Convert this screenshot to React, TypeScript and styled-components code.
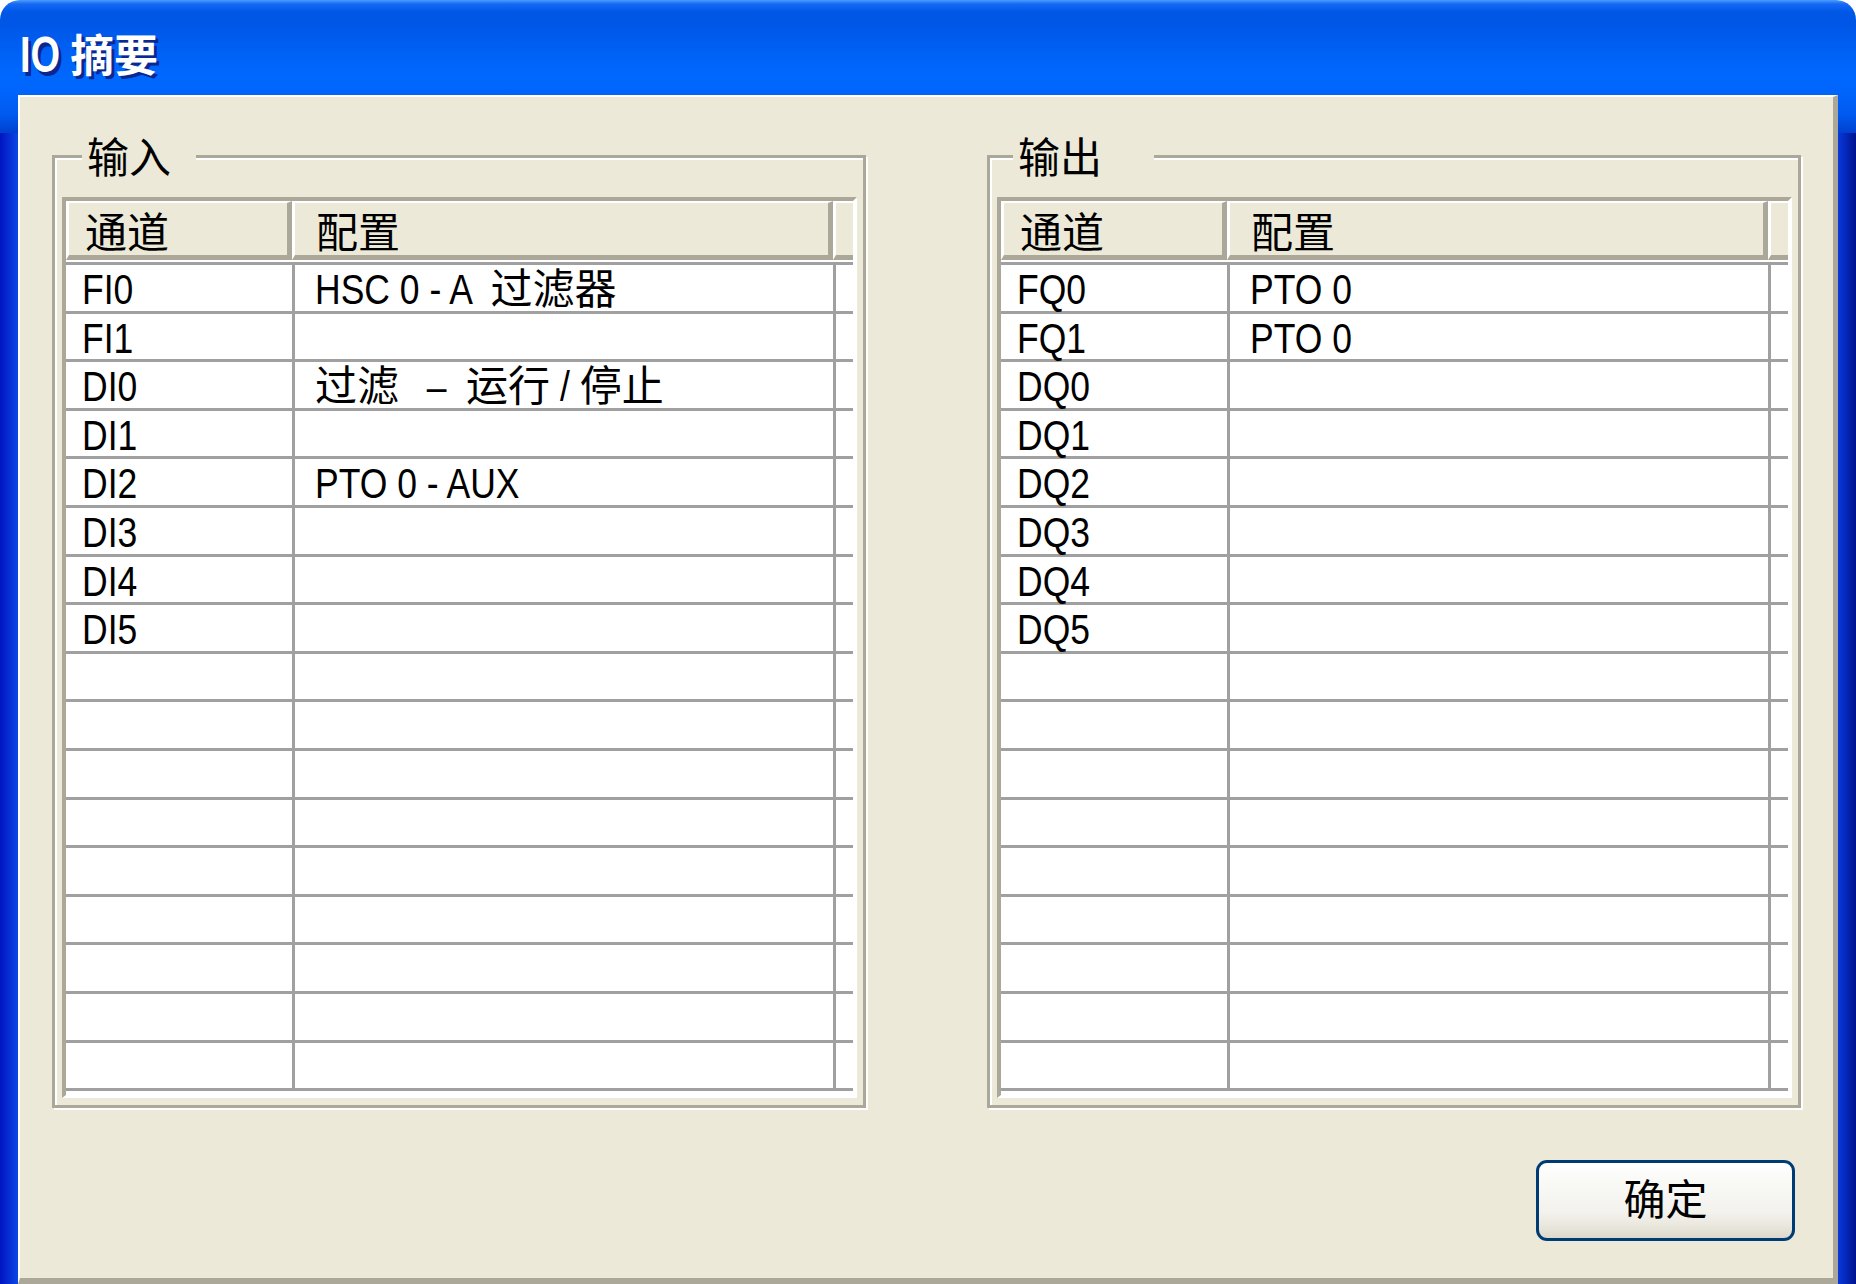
import styled, { createGlobalStyle } from "styled-components";

const GlobalStyle = createGlobalStyle`
  html, body {
    margin: 0;
    padding: 0;
    background: #fff;
  }
  body {
    width: 1856px;
    height: 1284px;
    overflow: hidden;
    font-family: "Liberation Sans", "Noto Sans CJK SC", sans-serif;
  }
`;

// Latin runs: the dialog uses a tall, narrow face. Set it small for the width
// and stretch it up around its own baseline.
const Latin = styled.span<{ $size: number; $sy: number }>`
  display: inline-block;
  font-family: "Liberation Sans", sans-serif;
  font-size: ${(p) => p.$size}px;
  line-height: 1;
  white-space: pre;
  transform: scaleY(${(p) => p.$sy});
  transform-origin: 0 0.8465em;
`;

const CJK = /([\u2e80-\u9fff\uff00-\uffef]+)/;

const MixedText = ({ value, size, sy }: { value: string; size: number; sy: number }) => (
  <>
    {value
      .split(CJK)
      .filter(Boolean)
      .map((part, i) =>
        CJK.test(part) ? (
          <span key={i}>{part}</span>
        ) : (
          <Latin key={i} $size={size} $sy={sy}>
            {part}
          </Latin>
        )
      )}
  </>
);

const Window = styled.div`
  width: 1856px;
  height: 1284px;
  display: flex;
  flex-direction: column;
  border-radius: 20px 20px 0 0;
  overflow: hidden;
`;

const TitleBar = styled.div`
  height: 95px;
  flex: none;
  box-sizing: border-box;
  padding: 29px 0 0 20px;
  line-height: 56px;
  font-size: 44px;
  font-weight: bold;
  color: #fff;
  text-shadow: 3px 3px 0 #0a2890;
  white-space: nowrap;
  background: linear-gradient(
    to bottom,
    #4b9dff 0px,
    #1669f5 4px,
    #0057e6 12px,
    #0057e7 26px,
    #0062f6 55px,
    #0068ff 78px,
    #0064fb 95px
  );

  & > ${Latin} {
    margin-right: 10px;
  }
`;

const Frame = styled.div`
  flex: 1;
  display: flex;
  min-height: 0;
`;

const SideBorder = styled.div<{ $side: "left" | "right" }>`
  width: 18px;
  flex: none;
  background:
    linear-gradient(to bottom, #0063fa 0px, #005af0 20px, #0049d8 32px, #0040d0 38px) top / 100% 38px no-repeat,
    linear-gradient(
      to right,
      ${(p) => (p.$side === "left" ? "#0014c2, #0c48e4" : "#0838dc, #00138c")}
    );
`;

const Content = styled.main`
  flex: 1;
  display: flex;
  flex-direction: column;
  background: #ece9d8;
  border-style: solid;
  border-width: 2px 5px 6px 2px;
  border-color: #fff #aca899 #aca899 #fff;
  padding: 33.5px 32px 0;
`;

const GroupsRow = styled.div`
  display: flex;
  justify-content: space-between;
`;

const GroupBox = styled.fieldset`
  margin: 0;
  width: 814px;
  min-width: 0;
  box-sizing: border-box;
  padding: 14.5px 6px 7px 7px;
  border: 3px solid #aca899;
  box-shadow: inset 2px 2px 0 #fff, 2px 2px 0 #fff;
`;

const GroupLegend = styled.legend<{ $lead: number; $trail: number }>`
  margin-left: ${(p) => p.$lead}px;
  padding: 4px ${(p) => p.$trail}px 0 5px;
  background: #ece9d8;
  font-size: 42px;
  line-height: 48px;
  color: #000;
`;

const ListView = styled.div`
  background: #fff;
  border-style: solid;
  border-width: 4px 4px 3px 4px;
  border-color: #aca899 #fff #fff #aca899;
  padding-bottom: 4px;
`;

const HeaderRow = styled.div`
  display: flex;
  height: 59px;
`;

const HeaderCell = styled.div<{ $w?: number; $pad: number }>`
  ${(p) => (p.$w ? `width: ${p.$w}px; flex: none;` : "flex: 1;")}
  box-sizing: border-box;
  background: #ece9d8;
  border-style: solid;
  border-width: 2px ${(p) => (p.$w ? 5 : 0)}px 5px 3px;
  border-color: #fff #aca899 #aca899 #fff;
  padding: 7.5px 0 0 ${(p) => p.$pad}px;
  font-size: 42px;
  line-height: 45px;
  color: #000;
  white-space: nowrap;
`;

const Body = styled.div`
  margin-top: 2px;
  border-top: 3px solid #a0a0a0;
`;

const Row = styled.div`
  display: flex;
  height: 48.6px;
  box-sizing: border-box;
  border-bottom: 3px solid #a0a0a0;
`;

const Cell = styled.div<{ $w?: number; $pad?: number }>`
  ${(p) => (p.$w ? `width: ${p.$w}px; flex: none; border-right: 3px solid #a0a0a0;` : "flex: 1;")}
  box-sizing: border-box;
  padding: 4px 0 0 ${(p) => p.$pad ?? 0}px;
  font-size: 42px;
  line-height: 41px;
  color: #000;
  white-space: nowrap;
`;

const ButtonRow = styled.div`
  display: flex;
  justify-content: flex-end;
  margin-top: 52px;
  padding-right: 6px;
`;

const OkButton = styled.button`
  width: 259px;
  height: 81px;
  padding: 0 0 7px;
  border: 3px solid #003c74;
  border-radius: 11px;
  background: linear-gradient(
    to bottom,
    #ffffff 0%,
    #f9f9f6 25%,
    #f3f2ed 65%,
    #ebe8df 82%,
    #dcd8cb 100%
  );
  font-family: "Noto Sans CJK SC", sans-serif;
  font-size: 42px;
  line-height: 1;
  color: #000;
`;

type Pair = [string, string];

const ROWS = 17;
const ROW_SIZE = 35.5;
const ROW_SY = 1.18;

const inputs: Pair[] = [
  ["FI0", "HSC 0 - A\u2002过滤器"],
  ["FI1", ""],
  ["DI0", "过滤\u2002 –  运行 / 停止"],
  ["DI1", ""],
  ["DI2", "PTO 0 - AUX"],
  ["DI3", ""],
  ["DI4", ""],
  ["DI5", ""],
];

const outputs: Pair[] = [
  ["FQ0", "PTO 0"],
  ["FQ1", "PTO 0"],
  ["DQ0", ""],
  ["DQ1", ""],
  ["DQ2", ""],
  ["DQ3", ""],
  ["DQ4", ""],
  ["DQ5", ""],
];

const padRows = (rows: Pair[]): Pair[] => [
  ...rows,
  ...Array.from({ length: ROWS - rows.length }, (): Pair => ["", ""]),
];

const IoGroup = ({
  title,
  lead,
  trail,
  rows,
}: {
  title: string;
  lead: number;
  trail: number;
  rows: Pair[];
}) => (
  <GroupBox>
    <GroupLegend $lead={lead} $trail={trail}>
      {title}
    </GroupLegend>
    <ListView>
      <HeaderRow>
        <HeaderCell $w={226} $pad={16}>
          通道
        </HeaderCell>
        <HeaderCell $w={541} $pad={21}>
          配置
        </HeaderCell>
        <HeaderCell $pad={0} />
      </HeaderRow>
      <Body>
        {padRows(rows).map(([channel, config], i) => (
          <Row key={i}>
            <Cell $w={229} $pad={16}>
              <MixedText value={channel} size={ROW_SIZE} sy={ROW_SY} />
            </Cell>
            <Cell $w={541} $pad={20}>
              <MixedText value={config} size={ROW_SIZE} sy={ROW_SY} />
            </Cell>
            <Cell />
          </Row>
        ))}
      </Body>
    </ListView>
  </GroupBox>
);

export default function App() {
  return (
    <>
      <GlobalStyle />
      <Window>
        <TitleBar>
          <MixedText value="IO摘要" size={38} sy={1.32} />
        </TitleBar>
        <Frame>
          <SideBorder $side="left" />
          <Content>
            <GroupsRow>
              <IoGroup title="输入" lead={20} trail={25} rows={inputs} />
              <IoGroup title="输出" lead={16} trail={52} rows={outputs} />
            </GroupsRow>
            <ButtonRow>
              <OkButton>确定</OkButton>
            </ButtonRow>
          </Content>
          <SideBorder $side="right" />
        </Frame>
      </Window>
    </>
  );
}
